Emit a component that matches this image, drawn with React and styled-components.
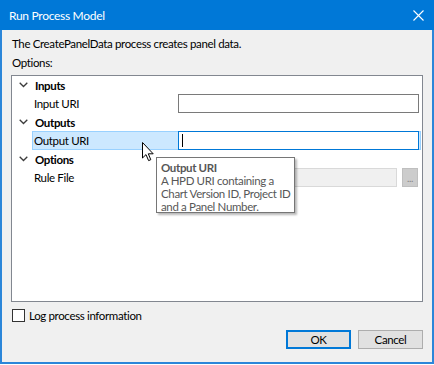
import React from 'react'
import styled, { createGlobalStyle } from 'styled-components'

const GlobalStyle = createGlobalStyle`
  html, body {
    margin: 0;
    padding: 0;
    background: #ffffff;
  }
  body {
    font-family: Lato, 'Noto Sans', sans-serif;
    font-size: 11.5px;
    letter-spacing: -0.35px;
  }
`

const Window = styled.div`
  position: relative;
  box-sizing: border-box;
  width: 434px;
  height: 364px;
  background: #f0f0f0;
  border: 2px solid #2b86d9;
  border-top: 0;
  display: flex;
  flex-direction: column;
  color: #000;
`

const TitleBar = styled.div`
  height: 30px;
  margin: 0 -2px;
  background: #0078d7;
  color: #fff;
  display: flex;
  align-items: center;
  justify-content: space-between;
  padding: 0 10px 0 9px;
  font-size: 12px;
  letter-spacing: -0.3px;
`

const Body = styled.div`
  flex: 1;
  display: flex;
  flex-direction: column;
  padding: 0 9px 0 9px;
`

const Description = styled.div`
  margin-top: 5px;
  height: 18px;
  line-height: 18px;
  padding-left: 1px;
`

const OptionsLabel = styled.div`
  height: 20px;
  line-height: 20px;
  padding-left: 1px;
`

const Grid = styled.div`
  margin-top: 2px;
  height: 227px;
  box-sizing: border-box;
  background: #fff;
  border: 1px solid #828790;
  display: flex;
  flex-direction: column;
  padding: 0 1px;
`

const CategoryRow = styled.div`
  height: 18px;
  display: flex;
  align-items: center;
  font-weight: 700;
`

const Chevron = styled.span`
  width: 21px;
  display: flex;
  justify-content: center;
  padding-right: 1px;
`

const ItemRow = styled.div`
  height: 19px;
  display: flex;
  align-items: center;
  margin-left: 19px;
  padding-right: 2px;
  position: relative;
  background: ${p => (p.selected ? '#cce8ff' : 'transparent')};
  box-shadow: ${p => (p.selected ? '0 0 0 1px #99d1ff inset' : 'none')};
`

const Label = styled.span`
  width: 144px;
  padding-left: 2px;
`

const Field = styled.div`
  flex: 1;
  height: 19px;
  box-sizing: border-box;
  background: ${p => (p.disabled ? '#f0f0f0' : '#fff')};
  border: 1px solid ${p => (p.focused ? '#0078d7' : p.disabled ? '#d9d9d9' : '#7a7a7a')};
  display: flex;
  align-items: center;
  padding-left: 3px;
`

const Caret = styled.span`
  width: 1px;
  height: 13px;
  background: #000;
`

const EllipsisButton = styled.div`
  width: 16px;
  height: 19px;
  box-sizing: border-box;
  margin-left: 5px;
  margin-right: 1px;
  background: #cccccc;
  border: 1px solid #bfbfbf;
  color: #838383;
  font-size: 10px;
  display: flex;
  align-items: center;
  justify-content: center;
  line-height: 1;
`

const Tooltip = styled.div`
  position: absolute;
  left: 154px;
  top: 157px;
  width: 139px;
  height: 56px;
  box-sizing: border-box;
  background: #fff;
  border: 1px solid #767676;
  box-shadow: 2px 2px 2px rgba(0, 0, 0, 0.28);
  padding: 3px 0 0 4px;
  color: #575757;
  line-height: 13px;
  white-space: nowrap;
`

const TipTitle = styled.div`
  font-weight: 700;
`

const Cursor = styled.svg`
  position: absolute;
  left: 140px;
  top: 142px;
`

const Footer = styled.div`
  display: flex;
  flex-direction: column;
  margin-top: 7px;
`

const CheckRow = styled.label`
  display: flex;
  align-items: center;
  height: 13px;
  padding-left: 1px;
`

const Box = styled.span`
  width: 13px;
  height: 13px;
  box-sizing: border-box;
  border: 1px solid #333;
  background: #fff;
  margin-right: 4px;
`

const Buttons = styled.div`
  display: flex;
  justify-content: flex-end;
  gap: 7px;
  margin-top: 8px;
`

const Button = styled.div`
  width: 65px;
  height: 19px;
  box-sizing: border-box;
  background: #e1e1e1;
  border: 1px solid ${p => (p.primary ? '#0078d7' : '#adadad')};
  box-shadow: ${p => (p.primary ? '0 0 0 1px #0078d7 inset' : 'none')};
  display: flex;
  align-items: center;
  justify-content: center;
`

const ChevronIcon = () => (
  <svg width="9" height="6" viewBox="0 0 9 6">
    <path d="M0.7 0.7 L4.5 4.5 L8.3 0.7" fill="none" stroke="#3c3c3c" strokeWidth="1.3" />
  </svg>
)

const Category = ({ title }) => (
  <CategoryRow>
    <Chevron>
      <ChevronIcon />
    </Chevron>
    {title}
  </CategoryRow>
)

export default function App() {
  return (
    <>
      <GlobalStyle />
      <Window>
        <TitleBar>
          <span>Run Process Model</span>
          <svg width="11" height="11" viewBox="0 0 11 11">
            <path d="M0.5 0.5 L10.5 10.5 M10.5 0.5 L0.5 10.5" stroke="#fff" strokeWidth="1.1" />
          </svg>
        </TitleBar>
        <Body>
          <Description>The CreatePanelData process creates panel data.</Description>
          <OptionsLabel>Options:</OptionsLabel>
          <Grid>
            <Category title="Inputs" />
            <ItemRow>
              <Label>Input URI</Label>
              <Field />
            </ItemRow>
            <Category title="Outputs" />
            <ItemRow selected>
              <Label>Output URI</Label>
              <Field focused>
                <Caret />
              </Field>
            </ItemRow>
            <Category title="Options" />
            <ItemRow>
              <Label>Rule File</Label>
              <Field disabled />
              <EllipsisButton>...</EllipsisButton>
            </ItemRow>
          </Grid>
          <Footer>
            <CheckRow>
              <Box />
              Log process information
            </CheckRow>
            <Buttons>
              <Button primary>OK</Button>
              <Button>Cancel</Button>
            </Buttons>
          </Footer>
        </Body>
        <Cursor width="13" height="20" viewBox="0 0 13 20">
          <path
            d="M0.5 0.5 L0.5 16 L4 12.6 L6.6 18.6 L8.8 17.7 L6.3 11.8 L11.2 11.8 Z"
            fill="#fff"
            stroke="#000"
            strokeWidth="1"
            strokeLinejoin="miter"
          />
        </Cursor>
        <Tooltip>
          <TipTitle>Output URI</TipTitle>
          <div>A HPD URI containing a</div>
          <div>Chart Version ID, Project ID</div>
          <div>and a Panel Number.</div>
        </Tooltip>
      </Window>
    </>
  )
}
